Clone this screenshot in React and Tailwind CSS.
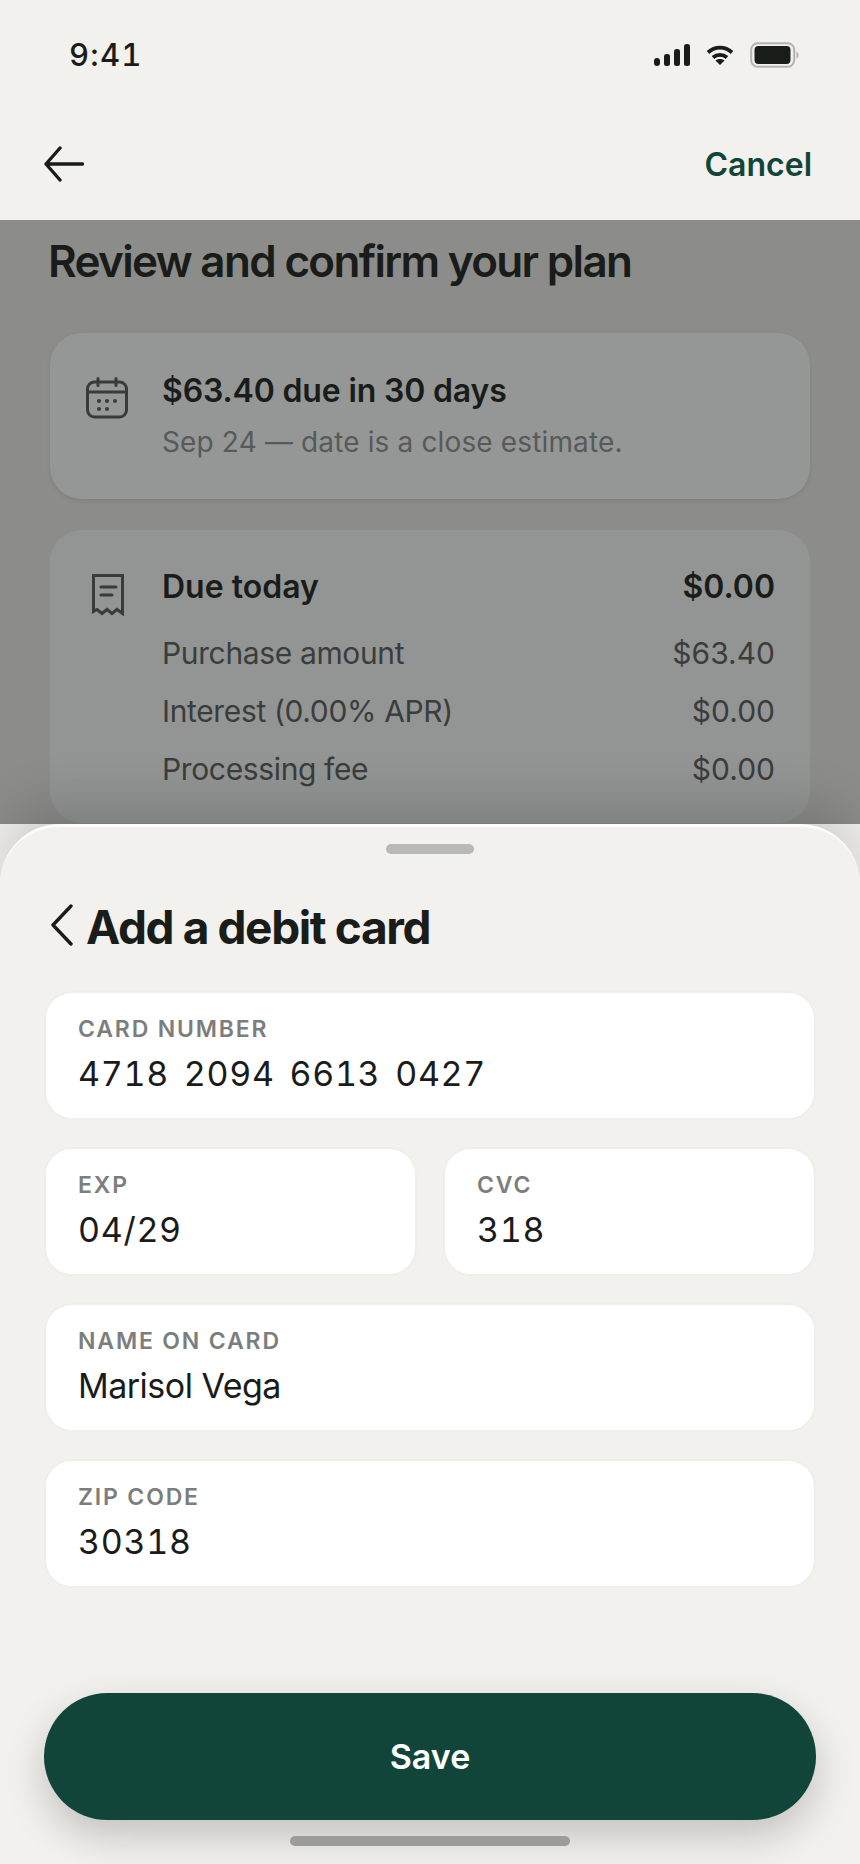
const font = { fontFamily: 'Inter, "Noto Sans", sans-serif' }

function StatusIcons() {
  return (
    <div className="flex items-center gap-[15px]">
      <svg width="38" height="24" viewBox="0 0 38 24" fill="#1a1c1a">
        <rect x="1" y="15" width="6" height="8" rx="3" />
        <rect x="11" y="11" width="6" height="12" rx="2.5" />
        <rect x="21" y="6" width="6" height="17" rx="2.5" />
        <rect x="31" y="1" width="6" height="22" rx="2.5" />
      </svg>
      <svg className="mr-[1px]" width="28" height="22" viewBox="0 0 28 22" fill="none" stroke="#1a1c1a" strokeWidth="3.8">
        <path d="M2 8.5C9 2 19 2 26 8.5" />
        <path d="M7 13.5C11 10 17 10 21 13.5" />
        <path d="M9.5 16.5L14 21l4.5-4.5C16 14.500 12 14.500 9.500 16.500Z" fill="#1a1c1a" stroke="none" />
      </svg>
      <svg width="49" height="26" viewBox="0 0 49 26" fill="none">
        <rect x="1.200" y="1.200" width="43" height="23.600" rx="6.500" stroke="#b2b2ae" strokeWidth="2" />
        <rect x="4.500" y="4" width="36" height="18" rx="4" fill="#1a1c1a" />
        <path d="M46.500 9.500c1.500.5 2 2 2 3.500s-.5 3-2 3.500z" fill="#b2b2ae" />
      </svg>
    </div>
  )
}

function CalendarIcon() {
  return (
    <svg width="42" height="42" viewBox="0 0 42 42" fill="none" stroke="#383b3a" strokeWidth="3" strokeLinecap="round">
      <rect x="1.500" y="5" width="39" height="35" rx="7" />
      <path d="M2 15h38M12 1.500v7M30 1.500v7" />
      <g fill="#383b3a" stroke="none">
        <circle cx="13" cy="24" r="2" />
        <circle cx="21" cy="24" r="2" />
        <circle cx="29" cy="24" r="2" />
        <circle cx="13" cy="32" r="2" />
        <circle cx="21" cy="32" r="2" />
      </g>
    </svg>
  )
}

function ReceiptIcon() {
  return (
    <svg width="32" height="42" viewBox="0 0 32 42" fill="none" stroke="#383b3a" strokeWidth="3">
      <path d="M1.500 1.500h29v38l-5.500-4-5 4-5-4-5 4-5-4-3.500 2z" strokeLinejoin="miter" />
      <path d="M9 13h15M9 21h11" strokeLinecap="round" />
    </svg>
  )
}

function Row({ label, value }) {
  return (
    <div className="flex h-[58px] items-center justify-between text-[30px] text-[#3a3d3c]">
      <span className="tracking-[-0.012em]">{label}</span>
      <span>{value}</span>
    </div>
  )
}

function Field({ label, value, className = '', valueClass = 'tracking-[0.02em] tabular-nums [word-spacing:5px]' }) {
  return (
    <div className={`h-[129px] rounded-[28px] border-2 border-[#efeeea] bg-white px-[32px] pt-[22px] ${className}`}>
      <div className="text-[23px] leading-[28px] font-semibold tracking-[0.08em] text-[#7b7e7c]">{label}</div>
      <div className={`mt-[9px] text-[34px] leading-[44px] text-[#1a1c1a] ${valueClass}`}>{value}</div>
    </div>
  )
}

export default function App() {
  return (
    <div style={font} className="relative h-[1864px] w-[860px] overflow-hidden bg-[#f2f1ed] text-[#1a1c1a]">
      {/* Status bar */}
      <div className="flex h-[110px] items-center justify-between pr-[61px] pl-[69px]">
        <span className="text-[31px] font-medium tracking-[0.04em] tabular-nums">9:41</span>
        <StatusIcons />
      </div>

      {/* Nav */}
      <div className="flex h-[110px] items-start justify-between pt-[36px] pr-[48px] pl-[44px]">
        <svg width="40" height="36" viewBox="0 0 40 36" fill="none" stroke="#1a1c1a" strokeWidth="3.400" strokeLinecap="round" strokeLinejoin="round">
          <path d="M38.500 18H2M16 2L2 18l14 16" />
        </svg>
        <span className="pt-[1px] text-[32px] leading-[36px] font-semibold text-[#12453a]">Cancel</span>
      </div>

      {/* Dimmed page behind the sheet */}
      <div className="h-[604px] bg-[#8c8c8a] px-[48px] pt-[16px]">
        <h1 className="text-[44px] leading-[50px] font-semibold tracking-[-0.038em]">Review and confirm your plan</h1>

        <div className="mt-[47px] ml-[2px] flex h-[166px] w-[760px] gap-[34px] rounded-[32px] bg-[#949796] pt-[38px] pl-[36px] shadow-[0_2px_4px_rgba(0,0,0,0.08)]">
          <div className="pt-[6px]"><CalendarIcon /></div>
          <div>
            <div className="text-[32px] leading-[40px] font-semibold tracking-[-0.005em]">$63.40 due in 30 days</div>
            <div className="mt-[11px] text-[28px] leading-[40px] tracking-[0.005em] text-[#575a59]">Sep 24 — date is a close estimate.</div>
          </div>
        </div>

        <div className="mt-[31px] ml-[2px] flex h-[293px] w-[760px] rounded-[32px] bg-[#929594] pt-[34px] pr-[35px] pl-[42px]">
          <div className="w-[70px] shrink-0 pt-[10px]"><ReceiptIcon /></div>
          <div className="flex-1">
            <div className="flex h-[46px] items-center justify-between text-[32px] font-semibold">
              <span>Due today</span>
              <span>$0.00</span>
            </div>
            <div className="mt-[14px]">
              <Row label="Purchase amount" value="$63.40" />
              <Row label="Interest (0.00% APR)" value="$0.00" />
              <Row label="Processing fee" value="$0.00" />
            </div>
          </div>
        </div>
      </div>

      {/* Bottom sheet */}
      <div className="absolute inset-x-0 top-[824px] h-[1040px] rounded-t-[60px] border-t-[3px] border-[#fdfcfa] bg-[#f2f1ed] px-[44px] shadow-[0_-24px_50px_rgba(0,0,0,0.14)]">
        <div className="mx-auto mt-[17px] h-[10px] w-[88px] rounded-full bg-[#b9b9b5]" />

        <div className="mt-[51px] flex h-[44px] items-center">
          <svg className="mb-[4px] ml-[6px]" width="24" height="42" viewBox="0 0 24 42" fill="none" stroke="#1a1c1a" strokeWidth="3.400" strokeLinecap="round" strokeLinejoin="round">
            <path d="M21 2L3 21l18 19" />
          </svg>
          <h2 className="ml-[12px] text-[46px] leading-[56px] font-bold tracking-[-0.03em]">Add a debit card</h2>
        </div>

        <div className="mt-[42px] flex flex-col gap-[27px]">
          <Field label="CARD NUMBER" value="4718 2094 6613 0427" />
          <div className="grid grid-cols-2 gap-[26px]">
            <Field label="EXP" value="04/29" />
            <Field label="CVC" value="318" />
          </div>
          <Field label="NAME ON CARD" value="Marisol Vega" valueClass="tracking-[-0.015em]" />
          <Field label="ZIP CODE" value="30318" />
        </div>

        <button className="mt-[105px] block h-[127px] w-[772px] rounded-full bg-[#12453a] text-[34px] font-semibold text-white shadow-[0_16px_40px_rgba(0,0,0,0.2)]">
          Save
        </button>

        <div className="mx-auto mt-[16px] h-[10px] w-[280px] rounded-full bg-[#9c9c98]" />
      </div>
    </div>
  )
}
